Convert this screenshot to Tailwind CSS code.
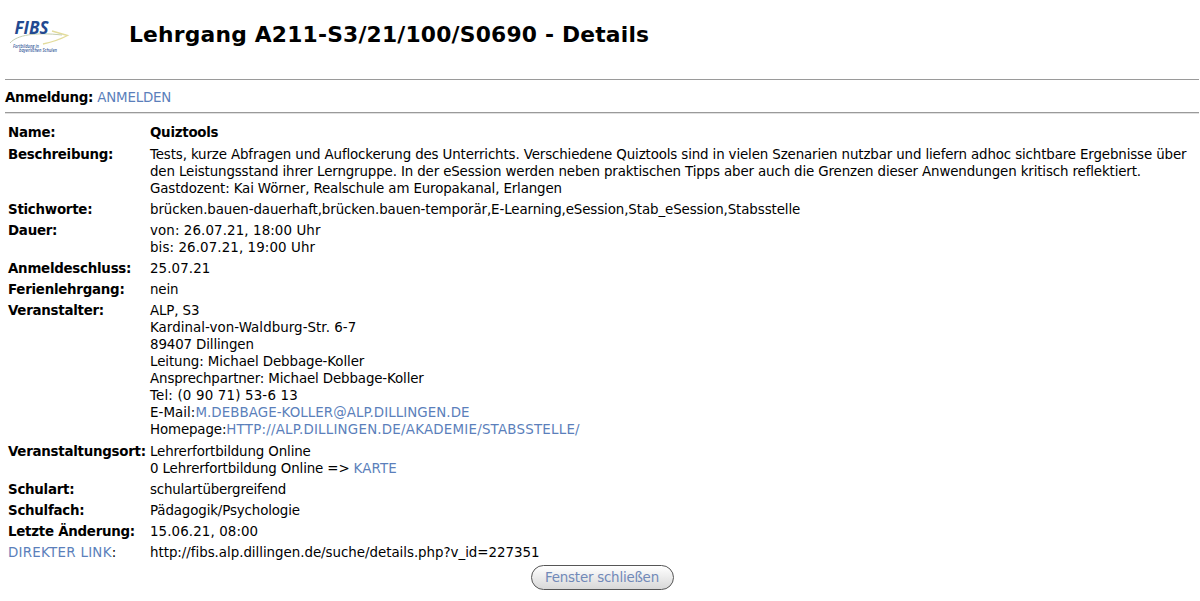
<!DOCTYPE html>
<html lang="de">
<head>
  <meta charset="UTF-8">
  <meta name="viewport" content="width=device-width, initial-scale=1.0">
  <title>Lehrgang A211-S3/21/100/S0690 - Details</title>
  <script src="https://cdn.jsdelivr.net/npm/@tailwindcss/browser@4"></script>
</head>
<body class="bg-white text-black font-['DejaVu_Sans',sans-serif] text-[13.4px] leading-[17px] tracking-[-0.135px] overflow-hidden">
  <div class="pl-[5px] pr-px">
    <!-- Kopf mit Logo -->
    <header class="flex h-[79px]">
      <svg class="w-[66px] h-[50px] mt-[10px] shrink-0" viewBox="5 10 66 50">
        <path d="M52 31 L67.5 35.5 C61 39 52 42 43 44" fill="none" stroke="#e3dc9c" stroke-width="1.4"/>
        <path d="M10 43 C17 35 35 32 62 35" fill="none" stroke="#c3cdb0" stroke-width="1"/>
        <text x="14.5" y="33.5" textLength="34" lengthAdjust="spacingAndGlyphs" letter-spacing="0" font-family="Open Sans, sans-serif" font-size="18" font-weight="700" font-style="italic" fill="#234a91">FIBS</text>
        <text x="13" y="48" textLength="26" lengthAdjust="spacingAndGlyphs" letter-spacing="0" font-family="Open Sans, sans-serif" font-size="5" font-weight="600" font-style="italic" fill="#3b5c9b">Fortbildung in</text>
        <text x="19" y="52.3" textLength="38" lengthAdjust="spacingAndGlyphs" letter-spacing="0" font-family="Open Sans, sans-serif" font-size="5" font-weight="600" font-style="italic" fill="#3b5c9b">bayerischen Schulen</text>
      </svg>
      <h1 class="ml-[58px] mt-[20px] text-[21.8px] leading-[30px] tracking-[0.2px] font-bold whitespace-nowrap">Lehrgang A211-S3/21/100/S0690 - Details</h1>
    </header>

    <div class="border-y border-[#9a9a9a] shadow-[0_1px_0_#e0e0e0] h-[34px] pt-[9px]">
      <b class="tracking-[-0.3px]">Anmeldung:</b> <a href="#" class="tracking-[-0.2px] text-[#5b7fbb]">ANMELDEN</a>
    </div>

    <table class="mt-[9px] ml-[3px] border-collapse whitespace-nowrap [&_td]:py-[2px] [&_td]:align-top [&_td:first-child]:w-[142px] [&_td:first-child]:max-w-[142px] [&_a]:text-[#5b7fbb] [&_b]:tracking-[-0.26px]">
      <tr class="h-[22px]"><td><b>Name:</b></td><td><b>Quiztools</b></td></tr>
      <tr>
        <td><b>Beschreibung:</b></td>
        <td>
          Tests, kurze Abfragen und Auflockerung des Unterrichts. Verschiedene Quiztools sind in vielen Szenarien nutzbar und liefern adhoc sichtbare Ergebnisse über<br>
          den Leistungsstand ihrer Lerngruppe. In der eSession werden neben praktischen Tipps aber auch die Grenzen dieser Anwendungen kritisch reflektiert.<br>
          Gastdozent: Kai Wörner, Realschule am Europakanal, Erlangen
        </td>
      </tr>
      <tr><td><b>Stichworte:</b></td><td class="tracking-[-0.1px]">brücken.bauen-dauerhaft,brücken.bauen-temporär,E-Learning,eSession,Stab_eSession,Stabsstelle</td></tr>
      <tr><td><b>Dauer:</b></td><td class="tracking-[0.1px]">von: 26.07.21, 18:00 Uhr<br>bis: 26.07.21, 19:00 Uhr</td></tr>
      <tr><td><b>Anmeldeschluss:</b></td><td class="tracking-[0.1px]">25.07.21</td></tr>
      <tr><td><b>Ferienlehrgang:</b></td><td>nein</td></tr>
      <tr class="h-[141px]">
        <td><b>Veranstalter:</b></td>
        <td>
          ALP, S3<br>
          <span class="tracking-[0.05px]">Kardinal-von-Waldburg-Str. 6-7</span><br>
          89407 Dillingen<br>
          <span class="tracking-[-0.09px]">Leitung: Michael Debbage-Koller</span><br>
          Ansprechpartner: Michael Debbage-Koller<br>
          <span class="tracking-[0.17px]">Tel: (0 90 71) 53-6 13</span><br>
          <span class="tracking-[0.06px]">E-Mail:<a href="#">M.DEBBAGE-KOLLER@ALP.DILLINGEN.DE</a></span><br>
          Homepage:<a href="#" class="tracking-[0.22px]">HTTP://ALP.DILLINGEN.DE/AKADEMIE/STABSSTELLE/</a>
        </td>
      </tr>
      <tr><td><b>Veranstaltungsort:</b></td><td>Lehrerfortbildung Online<br>0 Lehrerfortbildung Online =&gt; <a href="#" class="tracking-[0.1px]">KARTE</a></td></tr>
      <tr><td><b>Schulart:</b></td><td class="tracking-[-0.2px]">schulartübergreifend</td></tr>
      <tr><td><b>Schulfach:</b></td><td>Pädagogik/Psychologie</td></tr>
      <tr><td><b>Letzte Änderung:</b></td><td class="tracking-[0.1px]">15.06.21, 08:00</td></tr>
      <tr><td class="tracking-[0.27px]"><a href="#">DIREKTER LINK</a>:</td><td class="tracking-[-0.03px]">http://fibs.alp.dillingen.de/suche/details.php?v_id=227351</td></tr>
    </table>

    <div class="flex justify-center mt-[2px]">
      <button class="w-[143px] h-[25px] rounded-full border border-[#555] bg-linear-to-b from-white to-[#d8d8d8] text-[#7189b8] tracking-[-0.22px] whitespace-nowrap">Fenster schließen</button>
    </div>
  </div>
</body>
</html>
